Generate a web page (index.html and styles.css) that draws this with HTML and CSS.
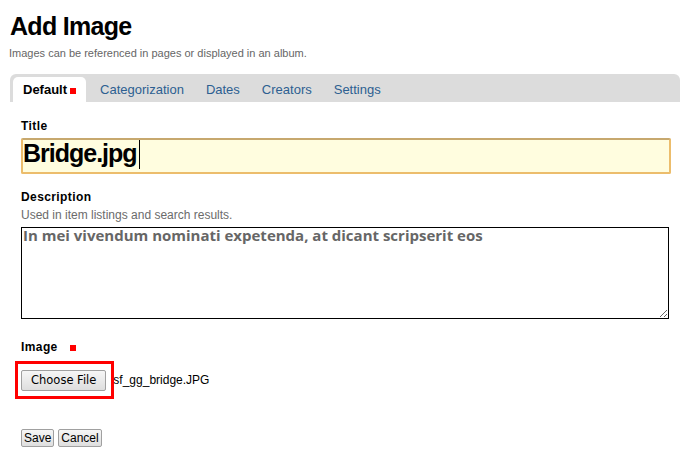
FILE: index.html
```html
<!DOCTYPE html>
<html lang="en">
<head>
  <meta charset="UTF-8" />
  <title>Add Image</title>
  <link rel="stylesheet" href="styles.css">
</head>
<body>
  <div class="page">
    <h1 class="page-title">Add Image</h1>
    <p class="page-desc">Images can be referenced in pages or displayed in an album.</p>

    <!-- Вкладки формы -->
    <ul class="tabs">
      <li class="tab active">Default<span class="required"></span></li>
      <li class="tab">Categorization</li>
      <li class="tab">Dates</li>
      <li class="tab">Creators</li>
      <li class="tab">Settings</li>
    </ul>

    <form class="edit-form">
      <div class="field">
        <label class="field-label">Title</label>
        <div class="title-input">Bridge.jpg<span class="caret"></span></div>
      </div>

      <div class="field field-desc">
        <label class="field-label">Description</label>
        <div class="field-help">Used in item listings and search results.</div>
        <textarea class="desc-input">In mei vivendum nominati expetenda, at dicant scripserit eos</textarea>
      </div>

      <div class="field field-image">
        <label class="field-label">Image <span class="required"></span></label>
        <div class="file-row">
          <button type="button" class="file-btn">Choose File</button>
          <span class="file-name">sf_gg_bridge.JPG</span>
          <!-- рамка-подсветка поверх кнопки -->
          <span class="highlight"></span>
        </div>
      </div>

      <div class="actions">
        <button type="button" class="btn">Save</button>
        <button type="button" class="btn">Cancel</button>
      </div>
    </form>
  </div>
</body>
</html>
```

FILE: styles.css
```css
/* Общие настройки */
*, *::before, *::after { box-sizing: border-box; }
body {
  margin: 0;
  background: #fff;
  color: #000;
  font-family: "Liberation Sans", Arial, sans-serif;
}

.page {
  padding: 0 12px 0 10px;
}

/* Заголовок */
.page-title {
  margin: 11px 0 0;
  font-size: 25px;
  line-height: 30px;
  letter-spacing: -0.7px;
  font-weight: bold;
}
.page-desc {
  margin: 5px 0 0 -1px;
  font-size: 11px;
  line-height: 14px;
  color: #666;
}

/* Вкладки */
.tabs {
  display: flex;
  gap: 2px;
  margin: 14px 0 0;
  padding: 3px 0 0 3px;
  list-style: none;
  background: #dcdcdc;
  border-radius: 6px 6px 0 0;
}
.tab {
  padding: 0 10px;
  font-size: 13px;
  line-height: 25px;
  color: #2d5f91;
}
.tab.active {
  margin-right: 2px;
  background: #fff;
  color: #000;
  font-weight: bold;
  border-radius: 5px 5px 0 0;
}

.required {
  display: inline-block;
  width: 6px;
  height: 6px;
  margin-left: 3px;
  background: #f00;
}

/* Форма */
.edit-form {
  padding: 17px 0 0 11px;
}
.field-label {
  display: block;
  font-size: 12px;
  line-height: 15px;
  font-weight: bold;
  letter-spacing: 0.4px;
}
.field-label .required {
  margin-left: 9px;
}

.title-input {
  width: 650px;
  height: 36px;
  margin-top: 4px;
  padding: 0;
  border: 2px solid #ecbd6c;
  border-top-color: #c7a86e;
  border-radius: 2px;
  background: #fffddf;
  font-size: 25px;
  line-height: 22px;
  font-weight: bold;
  letter-spacing: -1px;
}
.caret {
  display: inline-block;
  width: 1px;
  height: 29px;
  margin-left: 2px;
  vertical-align: -7px;
  background: #000;
}

.field-desc {
  margin-top: 16px;
}
.field-help {
  margin-top: 3px;
  font-size: 12px;
  line-height: 15px;
  color: #6b6b6b;
}
.desc-input {
  display: block;
  width: 648px;
  height: 92px;
  margin: 4px 0 0;
  padding: 0 1px;
  border: 1px solid #000;
  border-radius: 0;
  outline: none;
  font-family: "Open Sans", sans-serif;
  font-size: 15px;
  line-height: 14px;
  font-weight: bold;
  color: #666;
}

.field-image {
  margin-top: 21px;
}
.file-row {
  position: relative;
  display: flex;
  align-items: center;
  gap: 7px;
  margin-top: 15px;
}
.file-btn,
.btn {
  margin: 0;
  border: 1px solid #a0a0a0;
  border-radius: 2px;
  background: linear-gradient(#f6f6f6, #dedede);
  color: #000;
}
.file-btn {
  height: 21px;
  padding: 0 9px;
  font-family: "DejaVu Sans", sans-serif;
  font-size: 11.5px;
  line-height: 19px;
}
.file-name {
  font-size: 12px;
  line-height: 15px;
}
.highlight {
  position: absolute;
  left: -6px;
  top: -9px;
  width: 99px;
  height: 38px;
  border: 3px solid #f00;
  pointer-events: none;
}

.actions {
  display: flex;
  gap: 4px;
  margin-top: 38px;
}
.btn {
  height: 18px;
  padding: 1px 2px;
  font-family: "Liberation Sans", Arial, sans-serif;
  font-size: 12px;
  line-height: 14px;
}
```
